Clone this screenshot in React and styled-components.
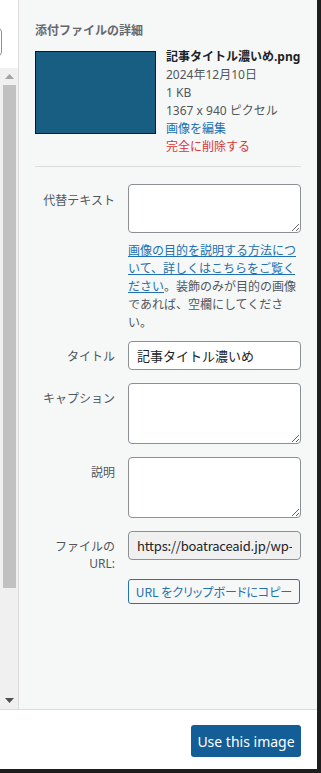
import React from "react";
import styled, { createGlobalStyle } from "styled-components";

const GlobalStyle = createGlobalStyle`
  html, body {
    margin: 0;
    padding: 0;
    background: #1e1e1e;
  }
  body {
    font-family: "Noto Sans", "Noto Sans CJK JP", sans-serif;
    -webkit-font-smoothing: antialiased;
  }
`;

const Frame = styled.div`
  width: 321px;
  height: 773px;
  display: flex;
  background: #1e1e1e;
  overflow: hidden;
`;

const Modal = styled.div`
  width: 317px;
  height: 769px;
  display: flex;
  flex-direction: column;
  background: #fff;
`;

const Main = styled.div`
  display: flex;
  height: 709px;
  border-bottom: 1px solid #dcdcde;
`;

const LeftPane = styled.div`
  width: 18px;
  flex: none;
  display: flex;
  flex-direction: column;
  border-right: 1px solid #dcdcde;
  background: #fff;
`;

const TopStub = styled.div`
  height: 68px;
  padding-top: 28px;
  box-sizing: border-box;
  overflow: hidden;
`;

const InputEdge = styled.div`
  width: 30px;
  height: 28px;
  margin-left: -28px;
  border: 1px solid #8c8f94;
  border-radius: 4px;
  box-sizing: border-box;
`;

const Track = styled.div`
  flex: 1;
  display: flex;
  flex-direction: column;
  align-items: center;
  background: #f0f0f0;
`;

const Arrow = styled.div`
  height: 17px;
  width: 100%;
  display: flex;
  align-items: center;
  justify-content: center;
  flex: none;
`;

const Thumb = styled.div`
  width: 13px;
  height: 503px;
  margin-left: 1px;
  background: #c1c1c1;
`;

const Spacer = styled.div`
  flex: 1;
`;

const Sidebar = styled.aside`
  flex: 1;
  background: #f6f7f7;
  padding: 21px 16px 0 16px;
  box-sizing: border-box;
`;

const Heading = styled.h2`
  margin: 0;
  font-size: 12px;
  line-height: 20px;
  font-weight: 700;
  color: #646970;
`;

const Details = styled.div`
  display: flex;
  gap: 10px;
  margin-top: 7px;
  padding-bottom: 10px;
  border-bottom: 1px solid #dcdcde;
`;

const Thumbnail = styled.div`
  width: 121px;
  height: 83px;
  margin-top: 3px;
  flex: none;
  background: #185e82;
  border: 1px solid #0b1b26;
  box-sizing: border-box;
`;

const Info = styled.div`
  display: flex;
  flex-direction: column;
  font-size: 12px;
  line-height: 18px;
  color: #50575e;
`;

const FileName = styled.div`
  font-weight: 700;
  color: #1d2327;
`;

const InfoLink = styled.a`
  color: ${(p) => (p.$danger ? "#d63638" : "#2271b1")};
  text-decoration: none;
`;

const Form = styled.div`
  padding-top: 17px;
  display: flex;
  flex-direction: column;
  gap: 13px;
`;

const Row = styled.label`
  display: grid;
  grid-template-columns: 80px 173px;
  column-gap: 13px;
  align-items: start;
`;

const Label = styled.span`
  text-align: right;
  font-size: 12px;
  line-height: 17px;
  color: #50575e;
  padding-top: ${(p) => p.$top || 7}px;
`;

const Field = styled.div`
  display: flex;
  flex-direction: column;
`;

const TextArea = styled.textarea`
  width: 173px;
  height: ${(p) => p.$h}px;
  box-sizing: border-box;
  border: 1px solid #8c8f94;
  border-radius: 4px;
  background: #fff;
  margin: 0;
  padding: 6px 8px;
  font-family: inherit;
  font-size: 13px;
  display: block;
`;

const TextInput = styled.input`
  width: 173px;
  height: ${(p) => p.$h || 30}px;
  box-sizing: border-box;
  border: 1px solid #8c8f94;
  border-radius: 4px;
  background: ${(p) => (p.readOnly ? "#f0f0f1" : "#fff")};
  color: #1d2327;
  padding: 0 8px;
  margin: 0;
  font-family: "Noto Sans CJK JP", sans-serif;
  font-size: 13px;
  letter-spacing: ${(p) => (p.readOnly ? "-0.2px" : "0")};
  display: block;
`;

const Help = styled.p`
  margin: 9px 0 -4px;
  font-size: 12px;
  line-height: 18px;
  color: #50575e;
  line-break: strict;

  a {
    color: #2271b1;
    text-decoration: underline;
  }
`;

const CopyButton = styled.button`
  width: 172px;
  height: 25px;
  margin-top: 19px;
  box-sizing: border-box;
  border: 1px solid #2271b1;
  border-radius: 3px;
  background: #f6f7f7;
  color: #2271b1;
  font-family: "Noto Sans CJK JP", sans-serif;
  font-feature-settings: "palt";
  font-size: 12px;
  padding: 0;
  white-space: nowrap;
`;

const Footer = styled.div`
  flex: 1;
  display: flex;
  justify-content: flex-end;
  align-items: flex-start;
  padding: 15px 16px 0 0;
`;

const PrimaryButton = styled.button`
  width: 110px;
  height: 32px;
  border: none;
  border-radius: 3px;
  background: #135e96;
  color: #fff;
  font-family: inherit;
  font-size: 14px;
  padding: 0;
`;

const Tri = ({ down }) => (
  <svg width="9" height="5" viewBox="0 0 9 5">
    <path d={down ? "M0 0h9L4.5 5z" : "M0 5h9L4.5 0z"} fill={down ? "#505050" : "#a3a3a3"} />
  </svg>
);

export default function App() {
  return (
    <Frame>
      <GlobalStyle />
      <Modal>
        <Main>
          <LeftPane>
            <TopStub>
              <InputEdge />
            </TopStub>
            <Track>
              <Arrow><Tri /></Arrow>
              <Thumb />
              <Spacer />
              <Arrow><Tri down /></Arrow>
            </Track>
          </LeftPane>
          <Sidebar>
            <Heading>添付ファイルの詳細</Heading>
            <Details>
              <Thumbnail />
              <Info>
                <FileName>記事タイトル濃いめ.png</FileName>
                <div>2024年12月10日</div>
                <div>1 KB</div>
                <div>1367 x 940 ピクセル</div>
                <InfoLink href="#">画像を編集</InfoLink>
                <InfoLink href="#" $danger>完全に削除する</InfoLink>
              </Info>
            </Details>
            <Form>
              <Row>
                <Label $top={8}>代替テキスト</Label>
                <Field>
                  <TextArea $h={49} />
                  <Help>
                    <a href="#">画像の目的を説明する方法について、詳しくはこちらをご覧ください</a>。装飾のみが目的の画像であれば、空欄にしてください。
                  </Help>
                </Field>
              </Row>
              <Row>
                <Label>タイトル</Label>
                <TextInput $h={29} defaultValue="記事タイトル濃いめ" />
              </Row>
              <Row>
                <Label>キャプション</Label>
                <TextArea $h={61} />
              </Row>
              <Row>
                <Label>説明</Label>
                <TextArea $h={61} />
              </Row>
              <Row>
                <Label>ファイルの<br />URL:</Label>
                <Field>
                  <TextInput $h={29} readOnly value="https://boatraceaid.jp/wp-content/uploads/2024/12/image.png" />
                  <CopyButton>URL をクリップボードにコピー</CopyButton>
                </Field>
              </Row>
            </Form>
          </Sidebar>
        </Main>
        <Footer>
          <PrimaryButton>Use this image</PrimaryButton>
        </Footer>
      </Modal>
    </Frame>
  );
}
